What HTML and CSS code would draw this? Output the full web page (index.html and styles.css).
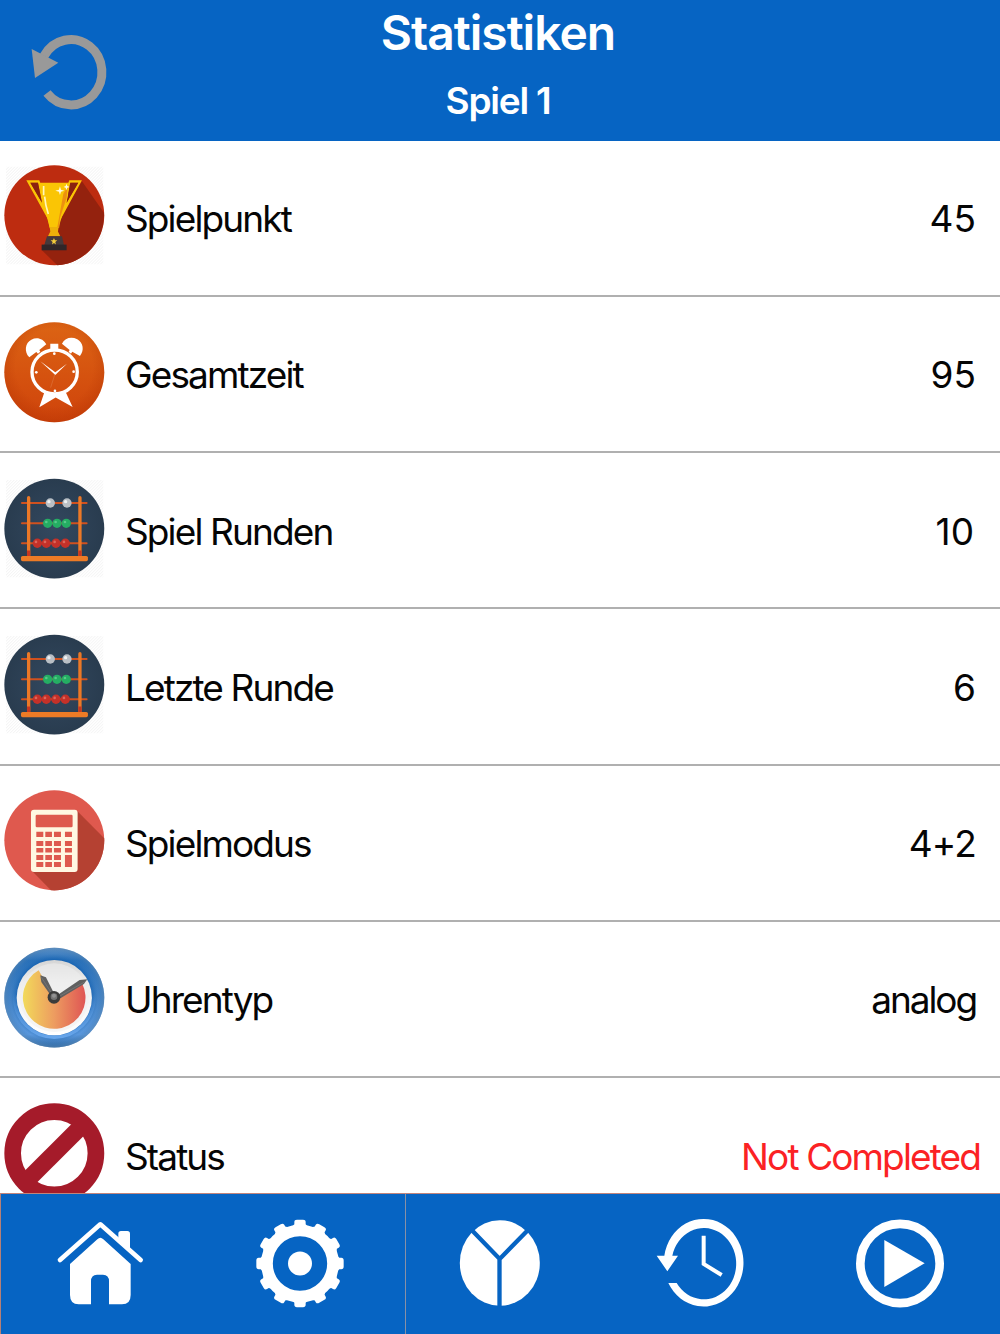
FILE: index.html
```html
<!DOCTYPE html>
<html lang="de">
<head>
<meta charset="utf-8">
<title>Statistiken</title>
<link rel="stylesheet" href="styles.css">
</head>
<body>
<svg class="defs" aria-hidden="true">
  <defs>
    <pattern id="hatch" width="9" height="9" patternUnits="userSpaceOnUse"><path d="M-1 10L10-1" stroke="#ececec" stroke-width="2"/></pattern>
    <radialGradient id="orange" cx=".5" cy=".45" r=".55"><stop offset=".7" stop-color="#ae3000" stop-opacity="0"/><stop offset="1" stop-color="#ae3000" stop-opacity=".35"/></radialGradient>
    <linearGradient id="orangeBase" x2="0" y2="1"><stop stop-color="#dc6414"/><stop offset="1" stop-color="#cf430b"/></linearGradient>
    <radialGradient id="navy"><stop stop-color="#33485f"/><stop offset="1" stop-color="#293c4f"/></radialGradient>
    <linearGradient id="rim" x2="0" y2="1"><stop stop-color="#6295cb"/><stop offset=".13" stop-color="#286fb8"/><stop offset=".5" stop-color="#4684c6"/><stop offset=".87" stop-color="#5f9be0"/><stop offset="1" stop-color="#2d659f"/></linearGradient>
    <radialGradient id="rimShade"><stop offset=".74" stop-color="#0758ad" stop-opacity=".65"/><stop offset=".88" stop-color="#3079bd" stop-opacity=".1"/><stop offset="1" stop-color="#5a86b0" stop-opacity=".6"/></radialGradient>
    <linearGradient id="rimGlow" x2="0" y2="1"><stop offset=".45" stop-color="#67a5ea" stop-opacity="0"/><stop offset="1" stop-color="#67a5ea"/></linearGradient>
    <linearGradient id="dial" x2="0" y2="1"><stop stop-color="#d5d5d5"/><stop offset=".3" stop-color="#ededed"/><stop offset="1" stop-color="#fff"/></linearGradient>
    <linearGradient id="warm"><stop stop-color="#f2da5a"/><stop offset=".5" stop-color="#ed9c60"/><stop offset="1" stop-color="#df5554"/></linearGradient>
    <g id="abacus">
      <path d="M18 38H310V330H18Z" fill="url(#hatch)"/>
      <circle cx="163" cy="184" r="150" fill="url(#navy)"/>
      <path d="M66 107H260M66 168H260M66 228H260" stroke="#d0511f" stroke-width="6" stroke-linecap="round"/>
      <path d="M86 91V264M240 91V264" stroke="#ec7826" stroke-width="10" stroke-linecap="round"/>
      <path d="M81 250h10v17h-10zM235 250h10v17h-10z" fill="#c73620"/>
      <rect x="63" y="266" width="201" height="16" rx="5" fill="#ed7b26"/>
      <g fill="#b9bfc5"><circle cx="151" cy="107" r="14"/><circle cx="201" cy="107" r="14"/></g>
      <g fill="#25ad63"><circle cx="143" cy="168" r="14"/><circle cx="171" cy="168" r="14"/><circle cx="199" cy="168" r="14"/></g>
      <g fill="#c43129"><circle cx="112" cy="228" r="14"/><circle cx="139" cy="228" r="14"/><circle cx="168" cy="228" r="14"/><circle cx="196" cy="228" r="14"/></g>
      <g fill="#eef0f2"><circle cx="147" cy="103" r="5"/><circle cx="197" cy="103" r="5"/></g>
      <g fill="#58c98a"><circle cx="139" cy="164" r="4"/><circle cx="167" cy="164" r="4"/><circle cx="195" cy="164" r="4"/></g>
      <g fill="#dc675b"><circle cx="108" cy="224" r="4"/><circle cx="135" cy="224" r="4"/><circle cx="164" cy="224" r="4"/><circle cx="192" cy="224" r="4"/></g>
    </g>
  </defs>
</svg>

<div class="app">
  <header class="header">
    <button class="back" aria-label="Zurück">
      <svg viewBox="0 0 360 420"><path d="M132 168A93 98 0 1 1 141 279" fill="none" stroke="#999" stroke-width="27"/><path d="M95 147L175 188L105 234Z" fill="#999"/></svg>
    </button>
    <div class="titles">
      <h1 class="title">Statistiken</h1>
      <h2 class="subtitle">Spiel 1</h2>
    </div>
  </header>

  <main class="list">
    <div class="row">
      <svg class="icon" viewBox="12 31 302 302">
        <path d="M18 36H310V329H18Z" fill="url(#hatch)"/>
        <circle cx="163" cy="182" r="150" fill="#bd2c10"/>
        <path d="M246 80L312 174A150 150 0 0 1 172 332L126 287L163 220Z" fill="#94220e"/>
        <path d="M79 77H118L121 85H205L208 77H246L181 196L175 219H149L145 196ZM91 84L126 144L114 84ZM211 84L200 144L235 84Z" fill="#fac505" fill-rule="evenodd"/>
        <path d="M91 84L126 144L114 84ZM235 84L200 144L211 84Z" fill="#8a2110"/>
        <path d="M118 84H208L202 130L176 219H149L126 130Z" fill="#fac505"/>
        <path d="M203 95L200 130L180 190L178 219H172L190 118Z" fill="#ed9110"/>
        <path d="M149 217H176L174 231L181 245H144L151 231Z" fill="#eeb00a"/>
        <path d="M131 94V122M134 126Q136 151 145 178" fill="none" stroke="#fff6bd" stroke-width="5"/>
        <path d="M180 95L183 105L193 108L183 111L180 121L177 111L166 108L177 105ZM200 87L202 94L209 97L202 99L200 107L197 99L191 97L197 94Z" fill="#fffbe4"/>
        <path d="M141 245H186L192 271H133Z" fill="#45393b"/><rect x="125" y="270" width="75" height="17" fill="#302629"/>
        <path d="M162 250L165 257H172L166 262L168 270L162 265L156 270L158 262L152 257H159Z" fill="#f5cd3a"/>
      </svg>
      <span class="label">Spielpunkt</span><span class="value number">45</span>
    </div>
    <div class="row">
      <svg class="icon" viewBox="12 31 302 302">
        <circle cx="163" cy="182" r="150" fill="url(#orangeBase)"/><circle cx="163" cy="182" r="150" fill="url(#orange)"/>
        <g fill="#fff"><path d="M88 137C72 120 75 94 94 84C112 75 130 82 139 98L118 115L121 120L114 126L109 121Z"/><path d="M240 133C254 117 250 93 232 83C214 74 195 79 186 96L209 115L206 120L213 126L217 120Z"/>
        <path d="M151 96H175V113H151ZM134 240L118 287L167 258L218 286L196 239Q166 254 134 240Z"/>
        <circle cx="163" cy="126" r="4"/><circle cx="109" cy="182" r="4"/><circle cx="221" cy="180" r="4"/><circle cx="165" cy="238" r="4"/>
        <path d="M121 149L166 182L201 156L166 190Z"/></g>
        <ellipse cx="164" cy="181" rx="68" ry="66" fill="none" stroke="#fff" stroke-width="10"/>
        <path d="M165 187L152 228" stroke="#e39469" stroke-width="1"/>
      </svg>
      <span class="label">Gesamtzeit</span><span class="value number">95</span>
    </div>
    <div class="row">
      <svg class="icon" viewBox="12 32 302 302"><use href="#abacus"/></svg>
      <span class="label">Spiel Runden</span><span class="value number rounds">10</span>
    </div>
    <div class="row">
      <svg class="icon" viewBox="12 32 302 302"><use href="#abacus"/></svg>
      <span class="label">Letzte Runde</span><span class="value number">6</span>
    </div>
    <div class="row">
      <svg class="icon" viewBox="12 31 302 302">
        <circle cx="163" cy="182" r="150" fill="#df594e"/>
        <path d="M231 93L313 176A150 150 0 0 1 153 332L97 275Z" fill="#b54132"/>
        <rect x="93" y="90" width="140" height="187" rx="9" fill="#fff8e2"/>
        <g fill="#de5a4e"><rect x="107" y="105" width="111" height="38" rx="4"/>
        <path d="M109 156h21v16h-21zM136 156h20v16h-20zM162 156h21v16h-21zM195 156h21v16h-21zM109 184h21v15h-21zM136 184h20v15h-20zM162 184h21v15h-21zM195 184h21v15h-21zM109 205h21v14h-21zM136 205h20v14h-20zM162 205h21v14h-21zM195 205h21v14h-21zM109 226h21v15h-21zM136 226h20v15h-20zM162 226h21v15h-21zM195 226h21v36h-21zM109 247h21v15h-21zM136 247h20v15h-20zM162 247h21v15h-21z"/></g>
      </svg>
      <span class="label">Spielmodus</span><span class="value mode">4+2</span>
    </div>
    <div class="row">
      <svg class="icon" viewBox="12 32 302 302">
        <circle cx="163" cy="184" r="150" fill="url(#rim)"/><circle cx="163" cy="184" r="150" fill="url(#rimShade)"/>
        <circle cx="163" cy="184" r="119" fill="none" stroke="url(#rimGlow)" stroke-width="10"/>
        <circle cx="163" cy="184" r="113" fill="url(#dial)"/><circle cx="163" cy="184" r="103" fill="#eee" opacity=".55"/>
        <path d="M163 184L116 102A94 94 0 1 0 247 142Z" fill="url(#warm)"/>
        <path d="M121 117L138 123L162 171L153 178L124 137Z" fill="#606060"/><path d="M174 175L239 131L262 129L252 143L179 187Z" fill="#606060"/>
        <path d="M124 123L158 175M178 180L254 137" stroke="#747474" stroke-width="3"/>
        <circle cx="162" cy="183" r="19" fill="#3b3b3b"/><circle cx="162" cy="181" r="10" fill="#747474"/><circle cx="162" cy="178" r="6" fill="#929292"/>
      </svg>
      <span class="label">Uhrentyp</span><span class="value">analog</span>
    </div>
    <div class="row">
      <svg class="icon" viewBox="12 39 302 302"><circle cx="163" cy="190" r="125" fill="none" stroke="#a51b2a" stroke-width="50"/><path d="M84 269L242 111" stroke="#a51b2a" stroke-width="51"/></svg>
      <span class="label">Status</span><span class="value open">Not Completed</span>
    </div>
  </main>

  <nav class="tabs">
    <a class="tab"><svg viewBox="0 27 600 420"><path d="M180 225L301 118L422 225" fill="none" stroke="#fff" stroke-width="14" stroke-linecap="round" stroke-linejoin="round"/><path d="M355 160V146Q355 138 363 138H382Q390 138 390 146V193Z" fill="#fff"/><path d="M210 237L292 163Q301 154 310 163L392 237V330Q392 358 366 358H327V289Q327 269 309 269H291Q273 269 273 289V358H236Q210 358 210 330Z" fill="#fff"/></svg></a>
    <a class="tab"><svg viewBox="600 27 600 420"><g transform="translate(900 235.5)" fill="#fff"><g id="teeth"><path id="tooth" d="M-23-112L-17-118V-124Q-17-131-9-131H9Q17-131 17-124V-118L23-112Z"/><use href="#tooth" transform="rotate(30)"/><use href="#tooth" transform="rotate(60)"/></g><use href="#teeth" transform="rotate(90)"/><use href="#teeth" transform="rotate(180)"/><use href="#teeth" transform="rotate(270)"/><circle r="99" fill="none" stroke="#fff" stroke-width="35"/><circle r="36"/></g></svg></a>
    <a class="tab"><svg viewBox="0 27 600 420"><ellipse cx="299.500" cy="234" rx="120" ry="128.500" fill="#fff"/><path d="M215 135L299 222L384 135M298.500 220V370" fill="none" stroke="#0664c3" stroke-width="13"/></svg></a>
    <a class="tab"><svg viewBox="-90 27 600 420"><path d="M103 212A119.500 131.500 0 1 1 115 294H140A97 107 0 1 0 127 212H144L112 259L80 212Z" fill="#fff"/><path d="M221 152V237L275 270" fill="none" stroke="#fff" stroke-width="12"/></svg></a>
    <a class="tab"><svg viewBox="510 27 600 420"><circle cx="810" cy="235.500" r="119" fill="none" stroke="#fff" stroke-width="26"/><path d="M763 165L884 235L763 306Z" fill="#fff"/></svg></a>
  </nav>
</div>
</body>
</html>
```
FILE: styles.css
```css
* { box-sizing: border-box; }
body { margin: 0; background: #fff; color: #050505; font-family: Inter, "Liberation Sans", sans-serif; }
.defs { position: absolute; width: 0; height: 0; }
.app { width: 1000px; height: 1334px; display: flex; flex-direction: column; overflow: hidden; }
.header { flex: none; height: 140.6px; display: grid; grid-template-columns: 120px 1fr 124px; background: #0664c3; color: #fff; }
.back { border: 0; padding: 0; background: none; }
.back svg { display: block; width: 120px; height: 140px; }
.titles { text-align: center; }
.title, .subtitle { margin: 0; font-weight: 600; white-space: nowrap; }
.title { padding-top: 3px; font-size: 48px; line-height: 60px; letter-spacing: -1px; }
.subtitle { padding-top: 13px; font-size: 37px; line-height: 50px; letter-spacing: -1.2px; }
.list { flex: 1; min-height: 0; overflow: hidden; }
.row { height: 156.3px; padding-left: 4px; display: flex; align-items: flex-start; border-bottom: 2px solid #b0b0b0; font-size: 37px; line-height: 50px; white-space: nowrap; }
.icon { flex: none; width: 100.6px; height: 100.6px; margin-top: 24.7px; overflow: visible; }
.label { margin: 53.4px 0 0 20.4px; letter-spacing: -1.88px; }
.value { margin: 53.4px 24px 0 auto; letter-spacing: -2.1px; }
.number { letter-spacing: 0; }
.rounds { margin-right: 26px; }
.mode { letter-spacing: -0.8px; }
.open { margin-right: 20px; letter-spacing: -1.88px; color: #fb2224; }
.tabs { flex: none; height: 141px; display: grid; grid-template-columns: repeat(5, 200px); background: linear-gradient(#8790a6, #8790a6) 405px 0 / 1px 100% no-repeat, #0664c3; border-top: 1px solid #c0847c; box-shadow: inset 1px 0 #b78076; }
.tab svg { display: block; width: 200px; height: 140px; }
```
